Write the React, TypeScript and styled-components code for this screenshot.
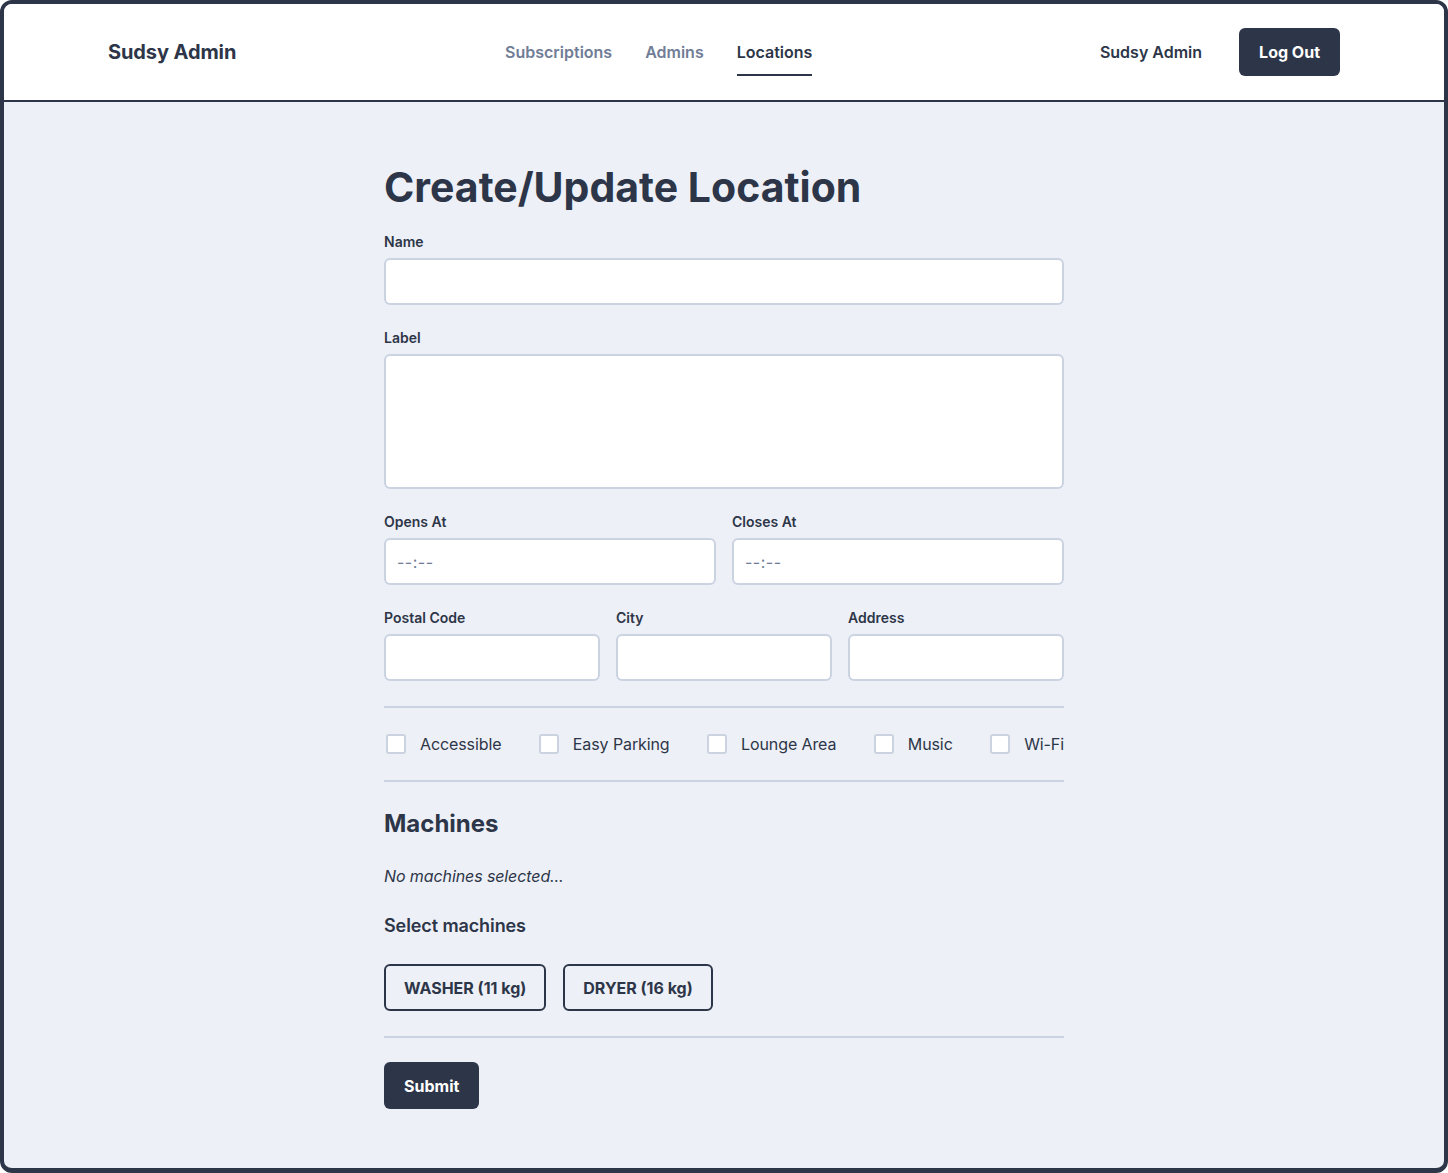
import React from "react";
import styled, { createGlobalStyle } from "styled-components";

const GlobalStyle = createGlobalStyle`
  * { box-sizing: border-box; }
  html, body { margin: 0; padding: 0; background: #ffffff; }
  body {
    font-family: Inter, "Noto Sans", "Liberation Sans", sans-serif;
    color: #2d3648;
  }
`;

const Frame = styled.div`
  min-height: 1173px;
  border: 4px solid #2d3648;
  border-bottom-width: 5px;
  border-radius: 12px;
  overflow: hidden;
  background: #edf0f7;
  display: flex;
  flex-direction: column;
`;

const Header = styled.header`
  background: #ffffff;
  height: 98px;
  border-bottom: 2px solid #2d3648;
  flex: none;
`;

const HeaderInner = styled.div`
  max-width: 1232px;
  height: 96px;
  margin: 0 auto;
  display: grid;
  grid-template-columns: 397px auto 1fr;
  align-items: center;
`;

const Brand = styled.div`
  font-size: 20px;
  font-weight: 700;
  letter-spacing: -0.1px;
  color: #2d3648;
`;

const Nav = styled.nav`
  display: flex;
  gap: 33px;
  align-items: center;
  height: 100%;
`;

const NavLink = styled.a<{ $active?: boolean }>`
  position: relative;
  font-size: 16px;
  font-weight: 600;
  text-decoration: none;
  color: ${(p) => (p.$active ? "#2d3648" : "#717d96")};
  line-height: 24px;
  &::after {
    content: "";
    display: ${(p) => (p.$active ? "block" : "none")};
    position: absolute;
    left: 0;
    right: 0;
    bottom: -12px;
    height: 2px;
    background: #2d3648;
  }
`;

const HeaderRight = styled.div`
  display: flex;
  justify-content: flex-end;
  align-items: center;
  gap: 37px;
`;

const UserName = styled.span`
  font-size: 16px;
  font-weight: 600;
  color: #2d3648;
`;

const SolidButton = styled.button`
  font-family: inherit;
  font-size: 16px;
  font-weight: 700;
  color: #ffffff;
  background: #2d3648;
  border: none;
  border-radius: 6px;
  height: 48px;
  padding: 0 20px;
  cursor: pointer;
`;

const Main = styled.main`
  flex: 1;
  display: flex;
  justify-content: center;
  padding: 61px 0 40px;
`;

const Form = styled.form`
  width: 680px;
  display: flex;
  flex-direction: column;
`;

const Title = styled.h1`
  margin: 0 0 21px;
  font-size: 41px;
  line-height: 48px;
  font-weight: 700;
  color: #2d3648;
`;

const Field = styled.div`
  display: flex;
  flex-direction: column;
  gap: 6px;
`;

const Label = styled.label`
  font-size: 14px;
  line-height: 20px;
  font-weight: 600;
  color: #2d3648;
`;

const inputBase = `
  font-family: inherit;
  font-size: 16px;
  color: #2d3648;
  background: #ffffff;
  border: 2px solid #cbd2e0;
  border-radius: 6px;
  padding: 0 12px;
  width: 100%;
  outline: none;
`;

const TextInput = styled.input`
  ${inputBase}
  height: 47px;
`;

const TimeBox = styled.div`
  ${inputBase}
  height: 47px;
  padding-left: 11px;
  display: flex;
  align-items: center;
  color: #717d96;
  letter-spacing: 0.5px;
`;

const TextArea = styled.textarea`
  ${inputBase}
  height: 135px;
  padding: 12px;
  resize: none;
  display: block;
`;

const Stack = styled.div`
  display: flex;
  flex-direction: column;
  gap: 23px;
  margin-bottom: 25px;
`;

const Row = styled.div<{ $cols: number }>`
  display: grid;
  grid-template-columns: repeat(${(p) => p.$cols}, 1fr);
  gap: 16px;
`;

const Divider = styled.hr`
  border: none;
  height: 2px;
  background: #cbd2e0;
  margin: 0;
`;

const CheckRow = styled.div`
  display: flex;
  justify-content: space-between;
  align-items: center;
  padding: 26px 0 26px;
`;

const CheckItem = styled.label`
  display: flex;
  align-items: center;
  gap: 14px;
  font-size: 16px;
  letter-spacing: -0.1px;
  color: #2d3648;
`;

const Box = styled.span`
  width: 20px;
  height: 20px;
  margin-left: 2px;
  border: 2px solid #cbd2e0;
  border-radius: 3px;
  background: #ffffff;
`;

const SectionTitle = styled.h2`
  margin: 26px 0 0;
  font-size: 24px;
  line-height: 32px;
  font-weight: 700;
  color: #2d3648;
`;

const Empty = styled.p`
  margin: 24px 0 0;
  font-size: 16px;
  line-height: 24px;
  font-style: italic;
  letter-spacing: -0.1px;
  color: #2d3648;
`;

const SubTitle = styled.h3`
  margin: 26px 0 0;
  font-size: 18px;
  line-height: 24px;
  font-weight: 600;
  letter-spacing: -0.1px;
  color: #2d3648;
`;

const MachineRow = styled.div`
  display: flex;
  gap: 17px;
  margin: 26px 0 25px;
`;

const OutlineButton = styled.button`
  font-family: inherit;
  font-size: 16px;
  font-weight: 700;
  color: #2d3648;
  background: transparent;
  border: 2px solid #2d3648;
  border-radius: 6px;
  height: 47px;
  padding: 0 18px;
  cursor: pointer;
`;

const SubmitRow = styled.div`
  margin-top: 24px;
`;

const SubmitButton = styled(SolidButton)`
  height: 47px;
`;

const amenities = ["Accessible", "Easy Parking", "Lounge Area", "Music", "Wi-Fi"];

export default function App() {
  return (
    <>
      <GlobalStyle />
      <Frame>
        <Header>
          <HeaderInner>
            <Brand>Sudsy Admin</Brand>
            <Nav>
              <NavLink href="#">Subscriptions</NavLink>
              <NavLink href="#">Admins</NavLink>
              <NavLink href="#" $active>
                Locations
              </NavLink>
            </Nav>
            <HeaderRight>
              <UserName>Sudsy Admin</UserName>
              <SolidButton type="button">Log Out</SolidButton>
            </HeaderRight>
          </HeaderInner>
        </Header>
        <Main>
          <Form onSubmit={(e) => e.preventDefault()}>
            <Title>Create/Update Location</Title>
            <Stack>
              <Field>
                <Label>Name</Label>
                <TextInput type="text" />
              </Field>
              <Field>
                <Label>Label</Label>
                <TextArea />
              </Field>
              <Row $cols={2}>
                <Field>
                  <Label>Opens At</Label>
                  <TimeBox>--:--</TimeBox>
                </Field>
                <Field>
                  <Label>Closes At</Label>
                  <TimeBox>--:--</TimeBox>
                </Field>
              </Row>
              <Row $cols={3}>
                <Field>
                  <Label>Postal Code</Label>
                  <TextInput type="text" />
                </Field>
                <Field>
                  <Label>City</Label>
                  <TextInput type="text" />
                </Field>
                <Field>
                  <Label>Address</Label>
                  <TextInput type="text" />
                </Field>
              </Row>
            </Stack>
            <Divider />
            <CheckRow>
              {amenities.map((a) => (
                <CheckItem key={a}>
                  <Box />
                  {a}
                </CheckItem>
              ))}
            </CheckRow>
            <Divider />
            <SectionTitle>Machines</SectionTitle>
            <Empty>No machines selected...</Empty>
            <SubTitle>Select machines</SubTitle>
            <MachineRow>
              <OutlineButton type="button">WASHER (11 kg)</OutlineButton>
              <OutlineButton type="button">DRYER (16 kg)</OutlineButton>
            </MachineRow>
            <Divider />
            <SubmitRow>
              <SubmitButton type="submit">Submit</SubmitButton>
            </SubmitRow>
          </Form>
        </Main>
      </Frame>
    </>
  );
}
